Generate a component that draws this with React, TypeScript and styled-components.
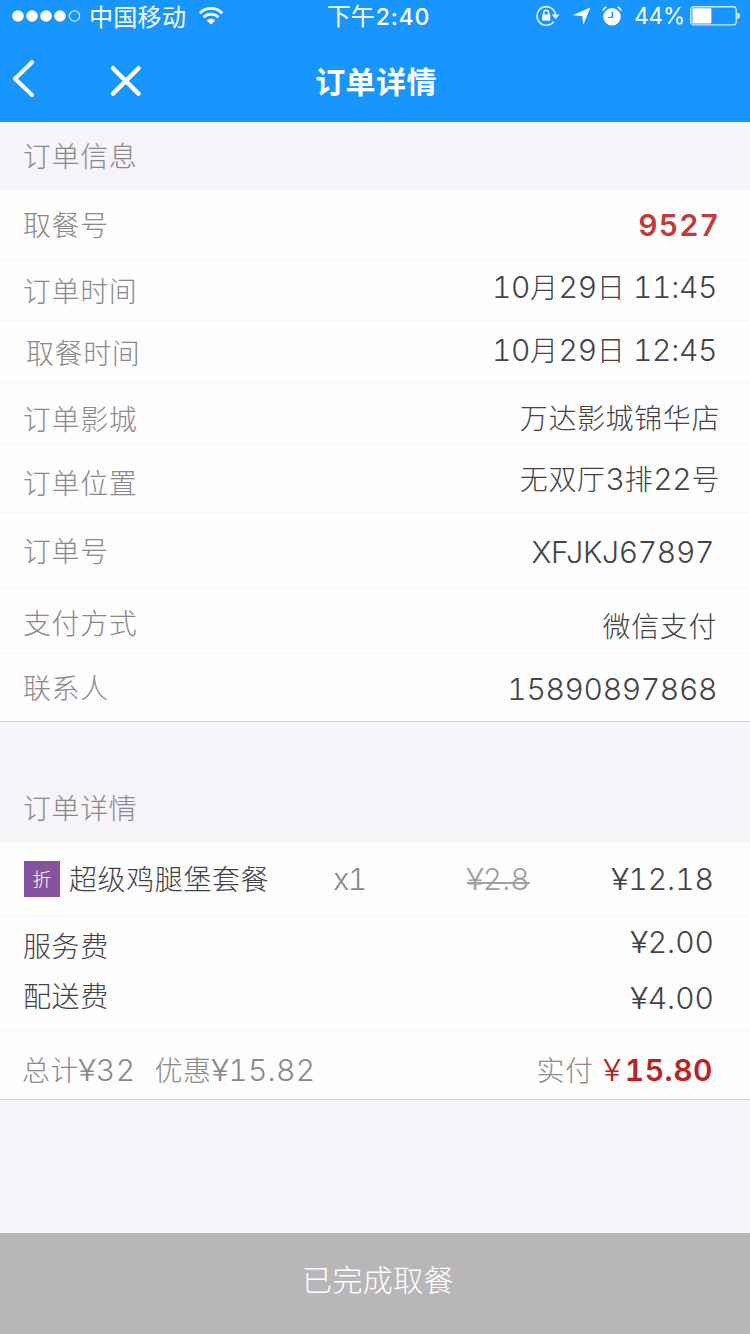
import React from 'react';
import styled, { createGlobalStyle } from 'styled-components';

const GlobalStyle = createGlobalStyle`
  * { box-sizing: border-box; }
  body {
    margin: 0;
    background: #f6f4f8;
    font-family: "Noto Sans CJK SC", sans-serif;
    font-weight: 300;
  }
`;

const Page = styled.div`
  display: flex;
  flex-direction: column;
  width: 750px;
  height: 1334px;
  background: #f6f4f8;
`;

const Header = styled.header`
  height: 122px;
  background: #1995fe;
  color: #fff;
`;

const StatusBar = styled.div`
  display: grid;
  grid-template-columns: 250px 1fr 250px;
  align-items: center;
  height: 32px;
`;

const StatusGroup = styled.div<{ $justify?: string }>`
  display: flex;
  align-items: center;
  justify-content: ${(p) => p.$justify ?? 'flex-start'};
  height: 32px;
  line-height: 30px;
  svg { flex: none; display: block; }
`;

const SignalSlot = styled.span`
  margin-left: 12px;
`;

const Carrier = styled.span`
  margin: 0 12px 0 8px;
  font-size: 24px;
  font-weight: 400;
  letter-spacing: 0.3px;
`;

const Clock = styled.span`
  margin-left: 7px;
  font-size: 24px;
  font-weight: 400;
`;

const ClockDigits = styled.span`
  margin-left: 1px;
  font-family: Inter, sans-serif;
  font-size: 23px;
  font-weight: 500;
  letter-spacing: 0.9px;
`;

const LocationSlot = styled.span`
  margin: 0 11px 0 12px;
`;

const Percent = styled.span`
  font: 400 22.5px/32px Inter, sans-serif;
  letter-spacing: -0.1px;
  margin: 0 5px 0 12px;
`;

const BatterySlot = styled.span`
  margin-right: 10px;
`;

const NavBar = styled.nav`
  display: grid;
  grid-template-columns: 250px 1fr 250px;
  height: 90px;
`;

const NavActions = styled.div`
  display: flex;
  align-items: flex-start;
  padding: 27px 0 0 11px;
  gap: 72px;
`;

const IconButton = styled.button`
  padding: 0;
  border: 0;
  background: none;
  color: inherit;
  svg { display: block; }
`;

const Title = styled.h1`
  margin: 0;
  padding: 28px 0 0 2px;
  text-align: center;
  font-size: 30px;
  line-height: 40px;
  font-weight: 700;
  letter-spacing: 0.4px;
`;

const SectionTitle = styled.h2<{ $height: number; $top: number }>`
  margin: 0;
  height: ${(p) => p.$height}px;
  padding: ${(p) => p.$top}px 0 0 23px;
  font-size: 28px;
  line-height: 40px;
  font-weight: 300;
  letter-spacing: 0.6px;
  color: #8b898c;
`;

const Panel = styled.section`
  background: #fefdfe;
  border-bottom: 1px solid #d3d2d6;
`;

const Row = styled.div<{ $height: number; $last?: boolean }>`
  display: flex;
  align-items: flex-start;
  height: ${(p) => p.$height}px;
  border-bottom: ${(p) => (p.$last ? '0' : '1px solid #f6f5f8')};
`;

type TextProps = {
  $top: number;
  $left?: number;
  $right?: number;
  $color?: string;
  $push?: boolean;
};

const Text = styled.span<TextProps>`
  flex: none;
  padding-top: ${(p) => p.$top}px;
  margin-left: ${(p) => (p.$push ? 'auto' : `${p.$left ?? 0}px`)};
  margin-right: ${(p) => p.$right ?? 0}px;
  font-size: 28px;
  line-height: 40px;
  letter-spacing: 0.6px;
  white-space: pre;
  color: ${(p) => p.$color ?? '#444346'};
`;

const Latin = styled.span<{ $bold?: boolean; $spacing?: number }>`
  font-family: Inter, sans-serif;
  font-size: 30px;
  font-weight: ${(p) => (p.$bold ? 600 : 300)};
  font-variant-numeric: tabular-nums;
  letter-spacing: ${(p) => p.$spacing ?? 0}px;
`;

const YenSign = styled.span<{ $gap?: number }>`
  display: inline-block;
  margin-right: ${(p) => p.$gap ?? 0}px;
  line-height: 1;
  transform: scaleX(1.12);
`;

const Struck = styled.s`
  text-decoration: none;
  background: linear-gradient(#a09fa2, #a09fa2) 0 62% / 100% 2px no-repeat;
`;

const Tag = styled.span`
  flex: none;
  width: 36px;
  height: 36px;
  margin: 19px 0 0 24px;
  background: #87529d;
  color: #fff;
  text-align: center;
  font-size: 19px;
  line-height: 35px;
`;

const Fees = styled.div`
  height: 115px;
  border-bottom: 1px solid #f6f5f8;
`;

const FeeRow = styled.div<{ $height: number }>`
  display: flex;
  align-items: flex-start;
  height: ${(p) => p.$height}px;
`;

const Footer = styled.button`
  height: 101px;
  margin-top: auto;
  padding: 0 0 11px 6px;
  border: 0;
  background: #b8b6b9;
  color: #fff;
  font-family: inherit;
  font-size: 30px;
  font-weight: 300;
  letter-spacing: 0.4px;
`;

/** Sets digits and Latin letters in their own face beside the Chinese text. */
function Mixed({ text, spacing }: { text: string; spacing?: number }) {
  return (
    <>
      {text.split(/([\u4e00-\u9fff]+)/).map((part, i) =>
        i % 2 ? part : part && <Latin key={i} $spacing={spacing}>{part}</Latin>,
      )}
    </>
  );
}

function Price({ amount, spacing }: { amount: string; spacing?: number }) {
  return (
    <Latin $spacing={spacing}>
      <YenSign>¥</YenSign>
      {amount}
    </Latin>
  );
}

type Info = {
  label: string;
  value: string;
  height: number;
  labelTop: number;
  valueTop: number;
  right: number;
  left?: number;
  bold?: boolean;
};

const info: Info[] = [
  { label: '取餐号', value: '9527', height: 70, labelTop: 14, valueTop: 14, right: 30, bold: true },
  { label: '订单时间', value: '10月29日 11:45', height: 61, labelTop: 10, valueTop: 6, right: 33 },
  { label: '取餐时间', value: '10月29日 12:45', height: 62, labelTop: 11, valueTop: 8, right: 33, left: 26 },
  { label: '订单影城', value: '万达影城锦华店', height: 61, labelTop: 15, valueTop: 14, right: 30 },
  { label: '订单位置', value: '无双厅3排22号', height: 69, labelTop: 18, valueTop: 14, right: 30 },
  { label: '订单号', value: 'XFJKJ67897', height: 76, labelTop: 17, valueTop: 18, right: 36 },
  { label: '支付方式', value: '微信支付', height: 65, labelTop: 13, valueTop: 16, right: 33 },
  { label: '联系人', value: '15890897868', height: 67, labelTop: 13, valueTop: 14, right: 33 },
];

const muted = '#8b898c';

function Signal() {
  return (
    <svg width="69" height="14" viewBox="0 0 69 14" fill="#fff">
      <circle cx="6" cy="7" r="5.8" />
      <circle cx="20" cy="7" r="5.8" />
      <circle cx="34" cy="7" r="5.8" />
      <circle cx="48" cy="7" r="5.8" />
      <circle cx="62.5" cy="7" r="5.2" fill="none" stroke="#d5efff" strokeWidth="1.2" />
    </svg>
  );
}

function Wifi() {
  return (
    <svg width="26" height="20" viewBox="0 0 26 20" fill="none" stroke="#fff" strokeWidth="2.7">
      <path d="M1.8 7.2 C8 0.8 18 0.8 24.2 7.2" />
      <path d="M5.6 11.3 C9.8 7.1 16.2 7.1 20.4 11.3" />
      <path d="M13 18.6 L8.8 14.4 C11 12.2 15 12.2 17.2 14.4 Z" fill="#fff" stroke="none" />
    </svg>
  );
}

function RotationLock() {
  return (
    <svg width="25" height="22" viewBox="0 0 25 22" fill="none" stroke="#e6f6ff" strokeWidth="1.5">
      <path d="M18.6 16.8 A9.3 9.3 0 1 1 20.6 10" />
      <path d="M16.8 9.4 H24.4 L20.6 14 Z" fill="#fff" stroke="none" />
      <rect x="7.2" y="9.4" width="8" height="6.2" fill="#fff" stroke="none" />
      <path d="M8.8 10 V7.6 a2.4 2.4 0 0 1 4.8 0 V10" />
    </svg>
  );
}

function Location() {
  return (
    <svg width="19" height="18" viewBox="0 0 19 18" fill="#fff">
      <path d="M18.4 0.4 L11.4 17.6 L10.3 8.9 L0.6 8.3 Z" />
    </svg>
  );
}

function Alarm() {
  return (
    <svg width="20" height="20" viewBox="0 0 20 20" fill="none">
      <circle cx="10" cy="10.8" r="8.7" fill="#fff" />
      <path d="M10.4 5.8 V11.4 H6.4" stroke="#1995fe" strokeWidth="1.4" />
      <path d="M0.9 4.6 Q1.6 2 4.4 0.9 M19.1 4.6 Q18.4 2 15.6 0.9" stroke="#fff" strokeWidth="1.6" />
    </svg>
  );
}

function Battery() {
  return (
    <svg width="50" height="20" viewBox="0 0 50 20">
      <rect x="0.8" y="0.7" width="45.4" height="18.2" rx="3" fill="none" stroke="#c8eaff" strokeWidth="1.4" />
      <rect x="2.4" y="2.2" width="19" height="15.2" rx="1" fill="#fff" />
      <path d="M47.3 6.4 Q50 7.4 50 9.8 Q50 12.2 47.3 13.2 Z" fill="#e6f6ff" />
    </svg>
  );
}

export default function App() {
  return (
    <Page>
      <GlobalStyle />
      <Header>
        <StatusBar>
          <StatusGroup>
            <SignalSlot><Signal /></SignalSlot>
            <Carrier>中国移动</Carrier>
            <Wifi />
          </StatusGroup>
          <StatusGroup $justify="center">
            <Clock>
              下午<ClockDigits>2:40</ClockDigits>
            </Clock>
          </StatusGroup>
          <StatusGroup $justify="flex-end">
            <RotationLock />
            <LocationSlot><Location /></LocationSlot>
            <Alarm />
            <Percent>44%</Percent>
            <BatterySlot><Battery /></BatterySlot>
          </StatusGroup>
        </StatusBar>
        <NavBar>
          <NavActions>
            <IconButton aria-label="返回">
              <svg width="26" height="42" viewBox="0 0 26 42" fill="none" stroke="#fff" strokeWidth="4" strokeLinecap="round" strokeLinejoin="round">
                <path d="M21 3.2 L4 19.8 L21 36" />
              </svg>
            </IconButton>
            <IconButton aria-label="关闭">
              <svg width="34" height="42" viewBox="0 0 34 42" fill="none" stroke="#fff" strokeWidth="4.4" strokeLinecap="round">
                <path d="M4 9.2 L29.5 34.6 M29.5 9.2 L4 34.6" />
              </svg>
            </IconButton>
          </NavActions>
          <Title>订单详情</Title>
        </NavBar>
      </Header>

      <SectionTitle $height={68} $top={13}>订单信息</SectionTitle>
      <Panel>
        {info.map((row, i) => (
          <Row key={row.label} $height={row.height} $last={i === info.length - 1}>
            <Text $top={row.labelTop} $left={row.left ?? 23} $color={muted}>{row.label}</Text>
            <Text $top={row.valueTop} $right={row.right} $push $color={row.bold ? '#c23b3c' : undefined}>
              {row.bold ? (
                <Latin $bold $spacing={1}>{row.value}</Latin>
              ) : (
                <Mixed text={row.value} spacing={-0.35} />
              )}
            </Text>
          </Row>
        ))}
      </Panel>

      <SectionTitle $height={120} $top={65}>订单详情</SectionTitle>
      <Panel>
        <Row $height={74}>
          <Tag>折</Tag>
          <Text $top={16} $left={9}>超级鸡腿堡套餐</Text>
          <Text $top={16} $left={64} $color={muted}><Latin $spacing={-1.5}>x1</Latin></Text>
          <Text $top={16} $left={101} $color="#a09fa2"><Struck><Price amount="2.8" /></Struck></Text>
          <Text $top={16} $right={36} $push><Price amount="12.18" /></Text>
        </Row>
        <Fees>
          <FeeRow $height={53}>
            <Text $top={9} $left={23}>服务费</Text>
            <Text $top={5} $right={36} $push><Price amount="2.00" /></Text>
          </FeeRow>
          <FeeRow $height={61}>
            <Text $top={6} $left={23}>配送费</Text>
            <Text $top={8} $right={36} $push><Price amount="4.00" /></Text>
          </FeeRow>
        </Fees>
        <Row $height={68} $last>
          <Text $top={18} $left={22} $color={muted}>总计<Price amount="32" spacing={0.4} /></Text>
          <Text $top={18} $left={19} $color={muted}>优惠<Price amount="15.82" spacing={0.3} /></Text>
          <Text $top={18} $right={10} $push $color={muted}>实付</Text>
          <Text $top={18} $right={37} $color="#b82324">
            <Latin><YenSign $gap={5}>¥</YenSign></Latin><Latin $bold $spacing={0.5}>15.80</Latin>
          </Text>
        </Row>
      </Panel>

      <Footer>已完成取餐</Footer>
    </Page>
  );
}
